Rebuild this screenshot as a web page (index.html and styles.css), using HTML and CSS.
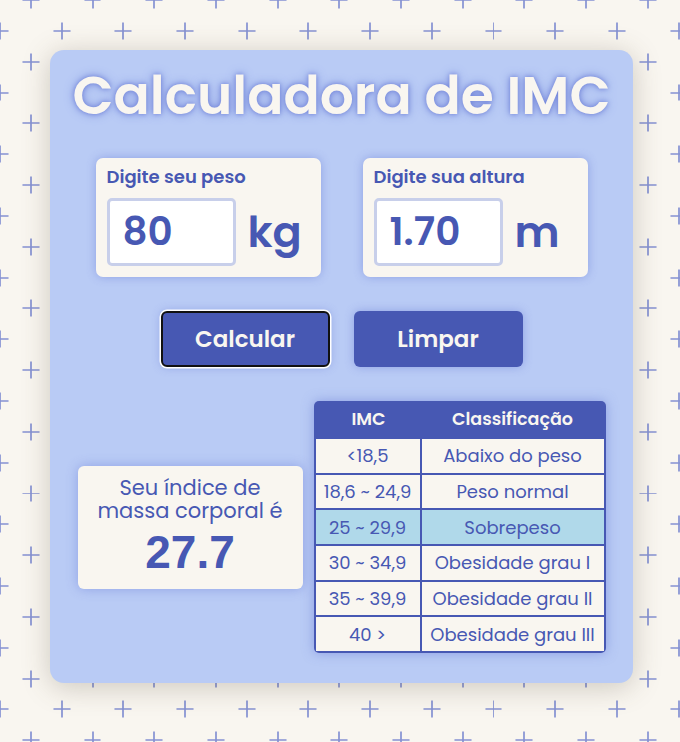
FILE: index.html
```html
<!DOCTYPE html>
<html lang="pt-BR">
<head>
<meta charset="utf-8">
<title>Calculadora de IMC</title>
<link rel="stylesheet" href="styles.css">
</head>
<body>
<main class="card">
  <h1 class="title">Calculadora de IMC</h1>
  <div class="inputs">
    <div class="field">
      <label class="field-label" for="peso">Digite seu peso</label>
      <div class="field-row">
        <input class="field-input" id="peso" type="text" value="80">
        <span class="unit">kg</span>
      </div>
    </div>
    <div class="field">
      <label class="field-label" for="altura">Digite sua altura</label>
      <div class="field-row">
        <input class="field-input" id="altura" type="text" value="1.70">
        <span class="unit">m</span>
      </div>
    </div>
  </div>
  <div class="actions">
    <button class="btn btn-focus" type="button">Calcular</button>
    <button class="btn" type="button">Limpar</button>
  </div>
  <div class="results">
    <div class="result">
      <p class="result-text">Seu índice de massa corporal é</p>
      <p class="result-value">27.7</p>
    </div>
    <div class="table-wrap">
      <table class="imc-table">
        <thead>
          <tr><th class="col-imc">IMC</th><th class="col-class">Classificação</th></tr>
        </thead>
        <tbody>
          <tr><td>&lt;18,5</td><td>Abaixo do peso</td></tr>
          <tr><td>18,6 ~ 24,9</td><td>Peso normal</td></tr>
          <tr class="active"><td>25 ~ 29,9</td><td>Sobrepeso</td></tr>
          <tr><td>30 ~ 34,9</td><td>Obesidade grau I</td></tr>
          <tr><td>35 ~ 39,9</td><td>Obesidade grau II</td></tr>
          <tr><td>40 &gt;</td><td>Obesidade grau III</td></tr>
        </tbody>
      </table>
    </div>
  </div>
</main>
</body>
</html>
```

FILE: styles.css
```css
* { box-sizing: border-box; }

html, body { margin: 0; padding: 0; }

body {
  min-height: 742px;
  font-family: Poppins, "Open Sans", sans-serif;
  color: #4758b3;
  background-color: #f9f6f0;
  background-image:
    url("data:image/svg+xml,%3Csvg xmlns='http://www.w3.org/2000/svg' width='61.7' height='61.7'%3E%3Cpath d='M30.85 22.35v17M22.35 30.85h17' stroke='%238591d3' stroke-width='1.7' fill='none'/%3E%3C/svg%3E"),
    url("data:image/svg+xml,%3Csvg xmlns='http://www.w3.org/2000/svg' width='61.7' height='61.7'%3E%3Cpath d='M30.85 22.35v17M22.35 30.85h17' stroke='%238591d3' stroke-width='1.7' fill='none'/%3E%3C/svg%3E");
  background-size: 61.7px 61.7px, 61.7px 61.7px;
  background-position: 0 -30.85px, -30.85px 0;
  padding-top: 50px;
  padding-left: 50px;
}

.card {
  width: 583px;
  height: 633px;
  background: #b9cbf5;
  border-radius: 14px;
  box-shadow: 0 4px 28px rgba(90, 80, 60, 0.28);
  padding: 14px 0 0;
}

.title {
  margin: 0;
  text-align: center;
  white-space: nowrap;
  font-size: 53.5px;
  font-weight: 600;
  line-height: 64px;
  color: #f9f6f0;
  text-shadow: 0 0 5px #6e81d8, 0 0 11px #8798e0;
}

.inputs {
  display: flex;
  justify-content: center;
  gap: 42px;
  margin-top: 30px;
}

.field {
  width: 225px;
  height: 119px;
  background: #f9f6f0;
  border-radius: 7px;
  padding: 8px 11px 0;
  box-shadow: 0 0 10px rgba(96, 114, 210, 0.45);
}

.field-label {
  display: block;
  font-size: 18px;
  font-weight: 600;
  line-height: 22px;
  color: #4758b3;
}

.field-row {
  display: flex;
  align-items: center;
  gap: 12px;
  margin-top: 10px;
}

.field-input {
  width: 129px;
  height: 68px;
  border: 3px solid #c8cfea;
  border-radius: 5px;
  background: #ffffff;
  padding: 0 0 2px 13px;
  font-family: inherit;
  font-size: 39px;
  font-weight: 600;
  color: #4758b3;
  outline: none;
}

.unit {
  font-size: 43px;
  font-weight: 600;
  line-height: 50px;
  color: #4758b3;
}

.actions {
  display: flex;
  justify-content: center;
  gap: 24px;
  margin-top: 34px;
}

.btn {
  width: 169px;
  height: 56px;
  border: 0;
  border-radius: 6px;
  background: #4758b3;
  color: #f9f6f0;
  font-family: inherit;
  font-size: 23px;
  font-weight: 600;
  box-shadow: 0 0 10px rgba(96, 114, 210, 0.45);
}

.btn-focus {
  border: 2px solid #111111;
  box-shadow: 0 0 0 1.5px #ffffff, 0 0 10px rgba(96, 114, 210, 0.45);
}

.results {
  display: flex;
  justify-content: center;
  align-items: center;
  gap: 11px;
  margin-top: 34px;
}

.result {
  width: 225px;
  height: 123px;
  background: #f9f6f0;
  border-radius: 6px;
  box-shadow: 0 0 12px rgba(96, 114, 210, 0.45);
  text-align: center;
  padding-top: 10px;
}

.result-text {
  margin: 0 auto;
  width: 200px;
  font-size: 21px;
  line-height: 23px;
  font-weight: 400;
  color: #4758b3;
}

.result-value {
  margin: 5px 0 0;
  font-family: "Liberation Sans", Arial, sans-serif;
  font-size: 46px;
  font-weight: 700;
  line-height: 50px;
  color: #4758b3;
}

.table-wrap {
  width: 292px;
  background: #4758b3;
  border-radius: 5px;
  box-shadow: 0 0 12px rgba(96, 114, 210, 0.5);
  padding: 0 2px 2px;
}

.imc-table {
  width: 100%;
  border-collapse: separate;
  border-spacing: 0;
  table-layout: fixed;
}

.imc-table th {
  height: 36px;
  font-size: 17.5px;
  font-weight: 600;
  color: #f9f6f0;
  text-align: center;
  padding: 0;
}

.col-imc { width: 106px; }

.imc-table td {
  height: 35.7px;
  padding: 0;
  text-align: center;
  font-size: 18px;
  font-weight: 400;
  color: #4758b3;
  background: #f9f6f0;
  border-top: 2px solid #4758b3;
}

.imc-table td:first-child { border-right: 2px solid #4758b3; }

.imc-table tr.active td { background: #b0d9ea; }
```
